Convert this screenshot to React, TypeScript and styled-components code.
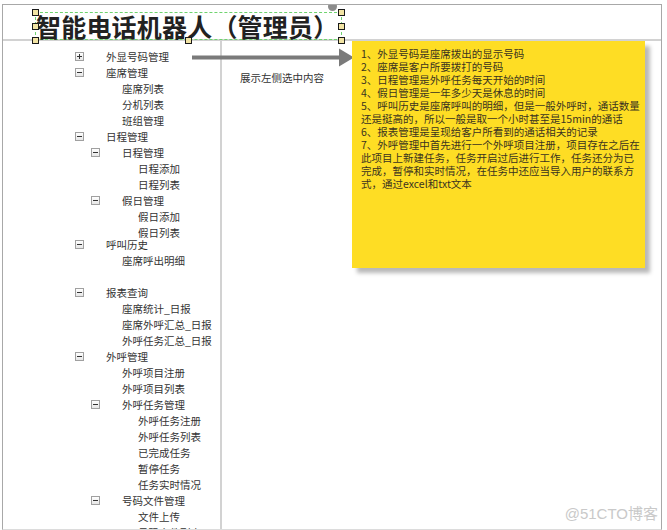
import * as React from "react";
import styled, { createGlobalStyle } from "styled-components";

const GlobalStyle = createGlobalStyle`
  html, body {
    margin: 0;
    padding: 0;
    background: #ffffff;
  }
  body {
    width: 667px;
    height: 530px;
    overflow: hidden;
    font-family: "Liberation Sans", "Noto Sans CJK SC", sans-serif;
  }
`;

const Frame = styled.div`
  position: relative;
  box-sizing: border-box;
  margin: 4px 0 0 2px;
  width: 660px;
  height: 526px;
  border: 1px solid #a8a8a8;
  border-bottom-color: #dcdcdc;
  overflow: hidden;
  display: flex;
  flex-direction: column;
`;

const Header = styled.div`
  flex: none;
  height: 27px;
  border-bottom: 2px solid #d2d2d2;
  padding: 7px 0 0 32px;
  position: relative;
  z-index: 2;
`;

const Title = styled.h1`
  position: relative;
  margin: 0;
  width: 307px;
  height: 28px;
  box-sizing: border-box;
  border: 1px dashed #6fd36f;
  font-family: "Noto Sans CJK SC", sans-serif;
  font-size: 25px;
  line-height: 26px;
  font-weight: 700;
  color: #222222;
  letter-spacing: 0.2px;
  white-space: nowrap;
`;

const Handle = styled.span<{ $x: number; $y: number }>`
  position: absolute;
  left: ${(p) => p.$x}px;
  top: ${(p) => p.$y}px;
  width: 7px;
  height: 7px;
  box-sizing: border-box;
  border: 1px solid #1a1a1a;
  background: #f2e4a4;
`;

const RotateKnob = styled.span`
  position: absolute;
  left: 292px;
  top: -11px;
  width: 9px;
  height: 9px;
  border-radius: 50%;
  background: #8c8c8c;
`;

const Body = styled.div`
  flex: 1;
  display: grid;
  grid-template-columns: 219px 1fr;
  min-height: 0;
`;

const Tree = styled.div`
  border-right: 2px solid #d2d2d2;
  padding-top: 7px;
  font-family: "Noto Sans CJK SC", sans-serif;
  font-size: 10.5px;
  color: #333333;
`;

const Row = styled.div<{ $level: number; $shift?: number }>`
  display: flex;
  align-items: center;
  height: 16px;
  padding-left: ${(p) => 72 + p.$level * 16}px;
  margin-top: ${(p) => p.$shift ?? 0}px;
  white-space: nowrap;
`;

const Expander = styled.span`
  flex: none;
  position: relative;
  width: 9px;
  height: 9px;
  box-sizing: border-box;
  border: 1px solid #a0a0a0;
  background: linear-gradient(#ffffff, #e6e6e6);
  margin-right: 22px;
  &::before {
    content: "";
    position: absolute;
    left: 1px;
    top: 3px;
    width: 5px;
    height: 1px;
    background: #333333;
  }
`;

const Plus = styled(Expander)`
  &::after {
    content: "";
    position: absolute;
    left: 3px;
    top: 1px;
    width: 1px;
    height: 5px;
    background: #333333;
  }
`;

const Spacer = styled.span`
  flex: none;
  width: 31px;
`;

const Content = styled.div`
  padding: 29px 0 0 18px;
  font-family: "Noto Sans CJK SC", sans-serif;
  font-size: 10.5px;
  line-height: 16px;
  color: #333333;
`;

const Arrow = styled.svg`
  position: absolute;
  left: 189px;
  top: 42px;
  z-index: 3;
`;

const Note = styled.div`
  position: absolute;
  left: 349px;
  top: 36px;
  width: 293px;
  height: 227px;
  box-sizing: border-box;
  padding: 6px 0 0 9px;
  background: #fedd24;
  box-shadow: 5px 5px 4px rgba(0, 0, 0, 0.28);
  font-family: "Noto Sans CJK SC", sans-serif;
  font-size: 10.5px;
  line-height: 13px;
  color: #3a3320;
  z-index: 3;
`;

const NoteLine = styled.div`
  white-space: nowrap;
  height: 13px;
`;

const Watermark = styled.div`
  position: absolute;
  right: 3px;
  bottom: 6px;
  font-family: "Liberation Sans", "Noto Sans CJK SC", sans-serif;
  font-size: 15px;
  color: #c9c9c9;
`;

type Item = { level: number; text: string; exp?: "+" | "-"; shift?: number; blank?: boolean };

const items: Item[] = [
  { level: 0, exp: "+", text: "外显号码管理" },
  { level: 0, exp: "-", text: "座席管理" },
  { level: 1, text: "座席列表" },
  { level: 1, text: "分机列表" },
  { level: 1, text: "班组管理" },
  { level: 0, exp: "-", text: "日程管理" },
  { level: 1, exp: "-", text: "日程管理" },
  { level: 2, text: "日程添加" },
  { level: 2, text: "日程列表" },
  { level: 1, exp: "-", text: "假日管理" },
  { level: 2, text: "假日添加" },
  { level: 2, text: "假日列表" },
  { level: 0, exp: "-", text: "呼叫历史", shift: -4 },
  { level: 1, text: "座席呼出明细" },
  { level: 0, text: "", blank: true },
  { level: 0, exp: "-", text: "报表查询" },
  { level: 1, text: "座席统计_日报" },
  { level: 1, text: "座席外呼汇总_日报" },
  { level: 1, text: "外呼任务汇总_日报" },
  { level: 0, exp: "-", text: "外呼管理" },
  { level: 1, text: "外呼项目注册" },
  { level: 1, text: "外呼项目列表" },
  { level: 1, exp: "-", text: "外呼任务管理" },
  { level: 2, text: "外呼任务注册" },
  { level: 2, text: "外呼任务列表" },
  { level: 2, text: "已完成任务" },
  { level: 2, text: "暂停任务" },
  { level: 2, text: "任务实时情况" },
  { level: 1, exp: "-", text: "号码文件管理" },
  { level: 2, text: "文件上传" },
  { level: 2, text: "号码文件列表" },
];

const noteLines = [
  "1、外显号码是座席拨出的显示号码",
  "2、座席是客户所要拨打的号码",
  "3、日程管理是外呼任务每天开始的时间",
  "4、假日管理是一年多少天是休息的时间",
  "5、呼叫历史是座席呼叫的明细，但是一般外呼时，通话数量",
  "还是挺高的，所以一般是取一个小时甚至是15min的通话",
  "6、报表管理是呈现给客户所看到的通话相关的记录",
  "7、外呼管理中首先进行一个外呼项目注册，项目存在之后在",
  "此项目上新建任务，任务开启过后进行工作，任务还分为已",
  "完成，暂停和实时情况，在任务中还应当导入用户的联系方",
  "式，通过excel和txt文本",
];

const handles = [
  [-4, -4],
  [-4, 10],
  [-4, 24],
  [149, 24],
  [302, -4],
  [302, 10],
  [302, 24],
];

export default function App() {
  return (
    <>
      <GlobalStyle />
      <Frame>
        <Header>
          <Title>
            智能电话机器人（管理员）
            {handles.map(([x, y], i) => (
              <Handle key={i} $x={x} $y={y} />
            ))}
            <RotateKnob />
          </Title>
        </Header>
        <Body>
          <Tree>
            {items.map((it, i) =>
              it.blank ? (
                <Row key={i} $level={0} />
              ) : (
                <Row key={i} $level={it.level} $shift={it.shift}>
                  {it.exp === "+" ? <Plus /> : it.exp === "-" ? <Expander /> : <Spacer />}
                  {it.text}
                </Row>
              )
            )}
          </Tree>
          <Content>展示左侧选中内容</Content>
        </Body>
        <Arrow width="162" height="22" viewBox="0 0 162 22">
          <rect x="0" y="8.5" width="150" height="4" fill="#7a7a7a" />
          <polygon points="147,1.5 162,10.5 147,19.5" fill="#7a7a7a" />
        </Arrow>
        <Note>
          {noteLines.map((l, i) => (
            <NoteLine key={i}>{l}</NoteLine>
          ))}
        </Note>
        <Watermark>@51CTO博客</Watermark>
      </Frame>
    </>
  );
}
